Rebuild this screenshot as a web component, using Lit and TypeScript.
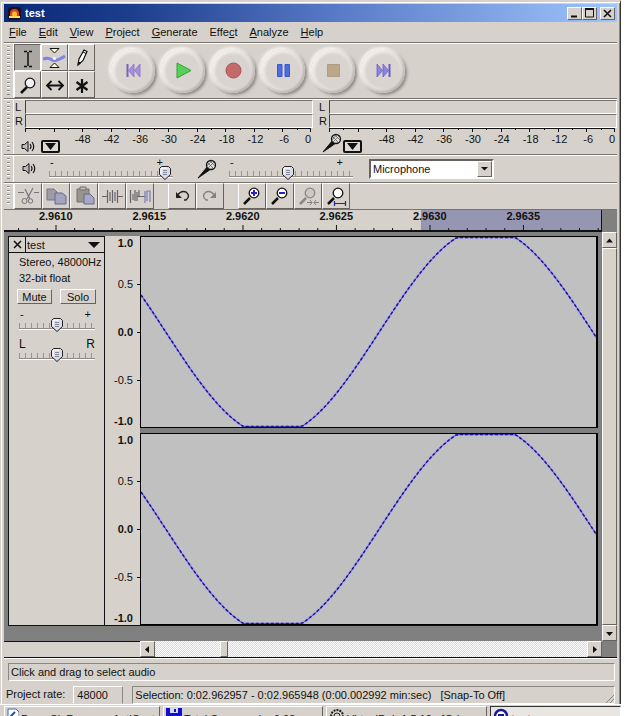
import { LitElement, html, svg, css } from "lit";
import { customElement, property } from "lit/decorators.js";

const base = css`
  * { box-sizing: border-box; }
  button, input, select { font: inherit; color: inherit; margin: 0; padding: 0; border-radius: 0; }
  svg { display: block; }
  .raised {
    background: #d6d1ca;
    border: 1px solid;
    border-color: #fff #66625e #66625e #fff;
  }
`;

/* Slider with tick marks and a shield-shaped handle */
@customElement("tick-slider")
class TickSlider extends LitElement {
  @property() low = "-";
  @property() high = "+";
  @property() label = "";
  @property({ type: Number }) value = 50;
  @property({ type: Boolean }) big = false;

  static styles = [base, css`
    :host { display: block; }
    .ends { display: flex; justify-content: space-between; height: 8px; line-height: 8px; padding: 0 4px 0 1px; }
    .ends.wide { padding-right: 10px; }
    .ends.big { font-size: 12px; padding: 0; }
    input {
      appearance: none;
      display: block;
      width: 100%;
      height: 14px;
      background:
        linear-gradient(#8d8984, #8d8984) 0 10px / 100% 1px no-repeat,
        linear-gradient(#fff, #fff) 0 11px / 100% 1px no-repeat,
        repeating-linear-gradient(90deg, #98948e 0 1px, transparent 1px 6px) 0 5px / 100% 5px no-repeat;
    }
    input::-webkit-slider-thumb {
      appearance: none;
      width: 12px;
      height: 14px;
      background: url("data:image/svg+xml,%3Csvg xmlns='http://www.w3.org/2000/svg' viewBox='0 0 12 14'%3E%3Cpath d='M2.5 .5h7l2 2v6L6 13.500 .5 8.500v-6z' fill='%23dcdce8' stroke='%23222'/%3E%3Cpath d='M2 8V3l1-1h5' fill='none' stroke='white'/%3E%3Cpath d='M4 4.500h4M4 6.500h4M4 8.500h4' stroke='%2388889c'/%3E%3C/svg%3E") no-repeat;
    }
  `];

  render() {
    const cls = this.big ? "ends big" : this.low === "-" && this.label.endsWith("volume") ? "ends wide" : "ends";
    return html`
      <div class=${cls}><span>${this.low}</span><span>${this.high}</span></div>
      <input type="range" aria-label=${this.label} .value=${String(this.value)}>`;
  }
}

const speaker = svg`<svg width="14" height="13" viewBox="0 0 14 13"><path d="M1 4.500h2.500L7 1.500v10L3.500 8.500H1z" fill="#bbb" stroke="#111"/><path d="M9 4q2 2.500 0 5M11 2q3.500 4.500 0 9" fill="none" stroke="#111" stroke-width="1.200"/></svg>`;
const mic = svg`<svg width="20" height="20" viewBox="0 0 20 20"><path d="M1 19L11 7l3 3z" fill="#111" stroke="#111"/><circle cx="14" cy="6" r="4.500" fill="#ddd" stroke="#111" stroke-width="1.300"/><path d="M11 4l5 5M13 2l5 5M17 3l-6 6M15 1.500L10 7" stroke="#555" stroke-width=".7"/></svg>`;

/* Peak meter with left and right bars over a dB scale */
@customElement("peak-meter")
class PeakMeter extends LitElement {
  @property() kind = "playback";

  static styles = [base, css`
    :host { display: block; flex: 1; min-width: 0; }
    .bars { display: grid; grid-template-columns: 11px 1fr; grid-auto-rows: 14px; }
    .bars span { line-height: 14px; padding-left: 1px; }
    .bar { border: 1px solid; border-color: #77736f #fff #fff #44423f; }
    .ticks { display: block; margin-left: 11px; width: calc(100% - 13px); height: 4px; }
    .foot { display: flex; }
    .icons { flex: 1; display: flex; align-items: flex-end; gap: 6px; padding-left: 7px; height: 21px; }
    .input .icons { gap: 1px; padding-left: 4px; }
    .scale { display: grid; grid-template-columns: repeat(8, 2fr) 1fr; width: calc((100% - 11px) * 0.85); text-align: center; line-height: 14px; }
    .scale span:last-child { text-align: right; padding-right: 2px; }
    .menu { width: 19px; height: 13px; border: 2px solid #111; border-radius: 2px; background: #ddd9d4; padding: 1px 2px; }
  `];

  render() {
    const out = this.kind === "playback";
    return html`
      <div class="bars">
        <span>L</span><div class="bar"></div>
        <span>R</span><div class="bar"></div>
      </div>
      <svg class="ticks" viewBox="0 0 286 4" preserveAspectRatio="none" shape-rendering="crispEdges">
        <path d="M0 .5H286" stroke="#111"/>
        ${Array.from({ length: 21 }, (_, i) => svg`<path d="M${Math.min(285.5, i * 14.3 + 0.5)} 0V${i % 2 ? 2 : 4}" stroke="#111"/>`)}
      </svg>
      <div class="foot ${out ? "" : "input"}">
        <div class="icons">
          ${out ? speaker : mic}
          <button class="menu" aria-label="${this.kind} meter menu"><svg width="11" height="7" viewBox="0 0 11 7"><path d="M0 0h11L5.500 7z" fill="#111"/></svg></button>
        </div>
        <div class="scale">${[-48, -42, -36, -30, -24, -18, -12, -6, 0].map((n) => html`<span>${n}</span>`)}</div>
      </div>`;
  }
}

/* One audio channel: amplitude axis and waveform */
@customElement("wave-channel")
class WaveChannel extends LitElement {
  static styles = [base, css`
    :host { display: grid; grid-template-columns: 35px 1fr; min-height: 0; }
    .axis { display: grid; grid-template-rows: 1fr 2fr 2fr 2fr 1fr; background: #d6d1ca; text-align: right; line-height: 14px; }
    .axis span { display: flex; align-items: center; justify-content: flex-end; gap: 4px; padding-right: 0; }
    .axis span::after { content: ""; width: 3px; height: 1px; background: #111; }
    .axis .top { align-items: flex-start; }
    .axis .bottom { align-items: flex-end; }
    .axis .top::after, .axis .bottom::after { background: transparent; }
    .strong { font-weight: bold; }
    .wave { border: 1px solid #000; border-right-width: 2px; background: #c0c0c0; min-height: 0; overflow: hidden; }
    .wave svg { width: 100%; height: 100%; }
    path { fill: none; vector-effect: non-scaling-stroke; }
  `];

  render() {
    const points = Array.from({ length: 153 }, (_, i) => {
      const x = i * 3;
      const v = -1.1 * Math.cos((Math.PI * (x - 131.5)) / 213.5);
      return `${x} ${(95 - Math.max(-1, Math.min(1, v)) * 94.5).toFixed(1)}`;
    });
    const d = "M" + points.join("L");
    return html`
      <div class="axis">
        <span class="top strong">1.0</span><span>0.5</span><span class="strong">0.0</span><span>-0.5</span><span class="bottom strong">-1.0</span>
      </div>
      <div class="wave">
        <svg viewBox="0 0 455 190" preserveAspectRatio="none" aria-label="Waveform">
          <path d=${d} stroke="#b4b0e0" stroke-width="3"></path>
          <path d=${d} stroke="#5b54d0" stroke-width="1"></path>
          <path d=${d} stroke="#1c148c" stroke-width="1.5" stroke-dasharray="3 2"></path>
        </svg>
      </div>`;
  }
}

const lens = (stroke: string, fill: string, sign: unknown, handle = "#111") => svg`
  <path d="M3 19l6-6" stroke=${handle} stroke-width="2.500"/><circle cx="13" cy="8" r="4.800" fill=${fill} stroke=${stroke} stroke-width="1.300"/>${sign}`;
const glyph = (body: unknown) => html`<svg width="23" height="22" viewBox="0 0 23 22" fill="none">${body}</svg>`;

const toolIcons: [string, unknown][] = [
  ["Selection tool", svg`<path d="M8 4.500h3M13 4.500h3M8 19.500h3M13 19.500h3M12 5v14" stroke="#111" stroke-width="1.500"/>`],
  ["Envelope tool", svg`<path d="M0 12q5-2 9 1q4 2 13-4" stroke="#7c86e4" stroke-width="3"/><path d="M7 1.500h9L11.500 6z" fill="#fffbd8" stroke="#111"/><path d="M7 20.500h9L11.500 16z" fill="#fffbd8" stroke="#111"/><circle cx="11.500" cy="11.500" r="1.500" fill="#fff"/>`],
  ["Draw tool", svg`<path d="M8 18l1-6 5-9 3 1.500-4 9z" fill="#fff" stroke="#111" stroke-width="1.200"/><path d="M8 18l.5-3 2 1zM13 5l3 1.500" fill="#111" stroke="#111"/>`],
  ["Zoom tool", svg`<path d="M5 19l6-6" stroke="#111" stroke-width="2.500"/><circle cx="14" cy="9" r="4.800" fill="#f2f2f4" stroke="#111" stroke-width="1.200"/>`],
  ["Time shift tool", svg`<path d="M5 11.500h14" stroke="#111" stroke-width="2"/><path d="M8.500 7L4 11.500 8.500 16M15.500 7L20 11.500 15.500 16" stroke="#111" stroke-width="1.800"/>`],
  ["Multi-tool mode", svg`<path d="M12 5v14M6.500 8l11 8M17.500 8l-11 8" stroke="#111" stroke-width="2.200"/>`],
];

const transport: [string, unknown][] = [
  ["Skip to start", svg`<path d="M1.500 1v13" stroke="#7a62b8" stroke-width="2"/><path d="M8 1v13L2.500 7.500zM14 1v13L8.500 7.500z" fill="#a690dc" stroke="#8670c4" stroke-width=".8"/>`],
  ["Play", svg`<path d="M1 0l14 7.500L1 15z" fill="#58d058" stroke="#32a03a"/>`],
  ["Record", svg`<circle cx="7.500" cy="7.500" r="7.500" fill="#c46a6a" stroke="#a65456"/>`],
  ["Pause", svg`<path d="M1.500 1.500h4.500v12H1.500zM9 1.500h4.500v12H9z" fill="#4c6ce4" stroke="#3c58cc"/>`],
  ["Stop", svg`<path d="M1.500 1.500h12v12h-12z" fill="#bca888" stroke="#b09c80"/>`],
  ["Skip to end", svg`<path d="M13.500 1v13" stroke="#6a5cc0" stroke-width="2"/><path d="M1 1v13L6.500 7.500zM7 1v13L12.500 7.500z" fill="#8c84e0" stroke="#6a60c8" stroke-width=".8"/>`],
];

const editGroups: [string, unknown][][] = [
  [
    ["Cut", svg`<path d="M8 4l5 10M16 3l-6 11M1 7.500h6M17 7.500h5" stroke="#77757a" stroke-width="1.200"/><circle cx="7.500" cy="16" r="2.500" stroke="#77757a"/><circle cx="13.500" cy="16" r="2.200" stroke="#77757a"/>`],
    ["Copy", svg`<path d="M2 4h7l3 3v8H2z" fill="#9c9ca4" stroke="#77777f"/><path d="M10 8h7l4 3v8H10z" fill="#a4a4c0" stroke="#66668a"/>`],
    ["Paste", svg`<path d="M4 4h12v13H4z" fill="#98958f" stroke="#707070"/><path d="M7 2h6v3H7z" fill="#bbb" stroke="#707070"/><path d="M11 9h6l4 4v6H11z" fill="#a8a8c4" stroke="#66668a"/>`],
    ["Trim", svg`<path d="M1 11.500h5M17 11.500h5M6.500 5v13M9 7v9M11.500 5v13M14 7v9M16.500 5v13" stroke="#66646a" stroke-width="1.200"/>`],
    ["Silence", svg`<path d="M1.500 5v13M4 9v6M6 5v11M8 7v9M10 5v6M8 11.500h8" stroke="#66646a" stroke-width="1.200"/><path d="M16 6v12M18 16V6h3v11" stroke="#7878b8" stroke-width="1.200"/>`],
  ],
  [
    ["Undo", svg`<path d="M6 11q4-6 9-4q5 4 0 8h-2" stroke="#222" stroke-width="1.400"/><path d="M5 7v6h6z" fill="#222"/>`],
    ["Redo", svg`<path d="M16 11q-4-6-9-4q-5 4 0 8h2" stroke="#85827e" stroke-width="1.400"/><path d="M17 7v6h-6z" fill="#85827e"/>`],
  ],
  [
    ["Zoom in", lens("#111", "#fff", svg`<path d="M10 8h6M13 5v6" stroke="#2222c8" stroke-width="2"/>`)],
    ["Zoom out", lens("#111", "#fff", svg`<path d="M10 8h6" stroke="#2222c8" stroke-width="2"/>`)],
    ["Fit selection", lens("#8a8782", "#ccc8c2", svg`<path d="M10 17.500h5M17 17.500h5M13 15l2 2.500-2 2.500M19 15l-2 2.500 2 2.500" stroke="#85827e"/>`, "#8a8782")],
    ["Fit project", lens("#111", "#fff", svg`<path d="M9 18.500h12M9.500 16v5M20.500 16v5" stroke="#2222a8" stroke-width="1.200"/>`)],
  ],
];

@customElement("app-root")
class AppRoot extends LitElement {
  static styles = [base, css`
    :host {
      display: flex;
      flex-direction: column;
      height: 100vh;
      padding-right: 19px;
      background: #fff;
      color: #111;
      font: 11px "Liberation Sans", Arial, sans-serif;
      white-space: nowrap;
      overflow: hidden;
      box-sizing: border-box;
    }
    .window {
      flex: 1;
      min-height: 0;
      display: flex;
      flex-direction: column;
      background: #d6d1ca;
      border: solid;
      border-width: 2px 1px 0 1px;
      border-color: #d6d1ca #333 #333 #d6d1ca;
      box-shadow: inset 1px 1px #fff, inset -1px 0 #8b8783;
      padding: 2px 3px 0 3px;
    }
    .title { flex: none; display: flex; align-items: center; height: 18px; padding: 0 2px 0 4px; gap: 4px; color: #fff; font-weight: bold; background: linear-gradient(90deg, #0a2a78, #1c3c8c 20%, #5a7cc8 55%, #a0c4fc); }
    h1 { font: inherit; margin: 0; flex: 1; }
    .controls { display: flex; }
    .controls button { width: 15px; height: 13px; display: grid; place-items: center; }
    .controls button:last-child { margin-left: 3px; }
    nav { flex: none; display: flex; gap: 12px; height: 20px; padding-left: 5px; }
    nav a { color: inherit; text-decoration: none; line-height: 20px; }
    .bar { flex: none; display: flex; border-top: 1px solid #77736f; box-shadow: inset 0 1px #fff; }
    .grip { flex: none; width: 10px; border-right: 1px solid #fff; padding: 3px; }
    .grip::before { content: ""; display: block; height: 100%; width: 3px; background: repeating-linear-gradient(#8d8984 0 1px, #fff 1px 2px, transparent 2px 4px); }
    .tools { display: grid; grid-template-columns: repeat(3, 27px); grid-auto-rows: 27px; padding-top: 1px; }
    .tool { display: grid; place-items: center; overflow: hidden; }
    .tool.on { background: #aaa6a1; border-color: #66625e #fff #fff #66625e; }
    .transport { display: flex; align-items: center; gap: 6px; padding-left: 16px; }
    .round {
      width: 44px; height: 44px; border: 0; border-radius: 50%; display: grid; place-items: center;
      background: radial-gradient(circle, #d9d4cf 52%, #e6e2dd 62%, #d4cfc9 72%);
      box-shadow: -2px -2px 3px #f6f4f1, 2px 2px 3px #908b86, inset 2px 2px 3px #f4f1ee, inset -2px -2px 3px #bbb6b0;
    }
    .meters { flex: 1; display: flex; gap: 5px; padding-top: 1px; height: 55px; }
    .mixer { height: 28px; }
    .mixer .row { flex: 1; display: flex; align-items: center; padding-left: 8px; }
    .mixer tick-slider { width: 124px; }
    .out { margin: 0 24px 0 13px; }
    .in { margin: 0 16px 0 12px; }
    select { width: 125px; height: 20px; background: #fff; border: 2px solid; border-color: #66625e #fff #fff #66625e; padding: 0 2px; appearance: none; }
    .combo { display: grid; grid-template-columns: 1fr 17px; align-items: center; }
    .combo select { grid-area: 1 / 1 / 2 / 3; }
    .combo .drop { grid-area: 1 / 2; z-index: 1; width: 15px; height: 16px; display: grid; place-items: center; pointer-events: none; }
    .edit { height: 27px; }
    .group { display: flex; margin-right: 14px; }
    .group .tool { width: 28px; }
    .timeline { flex: none; display: flex; height: 23px; background: #808080; border-top: 1px solid #77736f; }
    .ruler { flex: 1; background: linear-gradient(90deg, #d6d1ca 69.9%, #9796b2 69.9%); border: solid #111; border-width: 0 1px 2px 0; font-weight: bold; }
    .ruler div { display: flex; padding: 0 31px 0 5px; line-height: 13px; }
    .ruler span { flex: 1; text-align: center; }
    .ruler svg { width: 100%; height: 7px; }
    .corner { width: 15px; }
    .body { flex: 1; min-height: 0; display: flex; background: #808080; }
    .tracks { flex: 1; min-width: 0; padding: 4px 4px 15px; display: flex; }
    .track { flex: 1; min-width: 0; display: flex; border: 1px solid #111; border-right: 0; border-top: 0; }
    .panel { flex: none; width: 96px; background: #d6d1ca; border-right: 1px solid #111; border-top: 1px solid #111; }
    .head { display: flex; height: 16px; border-bottom: 1px solid #111; align-items: center; padding-right: 4px; }
    .head button { border: 0; background: none; }
    .close { width: 16px; height: 16px; display: grid; place-items: center; }
    .name { flex: 1; display: flex; align-items: center; justify-content: space-between; height: 15px; }
    .head .name { border-left: 1px solid #111; padding-left: 1px; }
    .info { padding: 1px 0 0 10px; line-height: 16px; }
    .switches { display: grid; grid-template-columns: 35px 36px; gap: 8px; padding: 3px 0 6px 8px; }
    .switches button { height: 15px; line-height: 12px; }
    .panel tick-slider { width: 76px; margin: 0 0 8px 10px; }
    .channels { flex: 1; min-width: 0; display: grid; grid-template-rows: 1fr 1fr; gap: 5px; background: linear-gradient(90deg, #d6d1ca 35px, #808080 35px); }
    .vscroll { flex: none; width: 15px; display: flex; flex-direction: column; }
    .vscroll button { height: 16px; display: grid; place-items: center; }
    .vthumb { flex: 1; background: #d7d3c8; }
    .hrow { flex: none; display: flex; height: 17px; border-bottom: 1px solid #111; background: #808080; }
    .hpad { width: 136px; background: #d6d1ca; border-top: 1px solid #111; }
    .hscroll { flex: 1; display: flex; background: repeating-conic-gradient(#fff 0 25%, #dcd9d2 0 50%) 0 0 / 2px 2px; }
    .hscroll button { width: 15px; display: grid; place-items: center; }
    .hthumb { width: 8px; margin: 0 auto 0 65px; }
    .status { flex: none; border-top: 1px solid #fff; padding: 4px 2px 0 4px; }
    .field { border: 1px solid; border-color: #8b8783 #fff #fff #8b8783; line-height: 16px; padding-left: 2px; }
    .facts { display: flex; padding-top: 5px; height: 23px; margin-left: -2px; line-height: 17px; }
    .facts input { width: 50px; margin: 0 9px 0 8px; padding-left: 3px; border: 1px solid; border-color: #fff #8b8783 #d6d1ca #fff; background: #d6d1ca; }
    .facts .field { flex: 1; display: flex; justify-content: space-between; align-items: flex-end; }
    pre { font: inherit; margin: 0; }
    .taskbar { flex: none; height: 12px; overflow: hidden; background: #d6d1ca; border-top: 1px solid #fff; display: grid; grid-template-columns: 156px 160px 161px 1fr; gap: 3px; padding: 1px 0 0 4px; }
    .taskbar button { height: 20px; display: flex; align-items: flex-start; gap: 2px; padding: 1px 0 0 2px; line-height: 18px; text-align: left; overflow: hidden; }
    .taskbar button span { padding-top: 2px; }
    .taskbar .active { border-color: #333 #fff #fff #333; font-weight: bold; background: #e9e6e1; }
    .taskbar svg { flex: none; }
  `];

  tri(d: string) {
    return html`<svg width="9" height="9" viewBox="0 0 9 9"><path d=${d} fill="#111"/></svg>`;
  }

  render() {
    const menus = [["", "F", "ile"], ["", "E", "dit"], ["", "V", "iew"], ["", "P", "roject"], ["", "G", "enerate"], ["Effe", "c", "t"], ["", "A", "nalyze"], ["", "H", "elp"]];
    return html`
      <div class="window">
        <header class="title">
          <svg width="13" height="13" viewBox="0 0 13 13"><rect width="13" height="13" rx="3" fill="#1a1020"/><path d="M2 7q0-5 4.500-5T11 7v3H2z" fill="#e8401c"/><circle cx="6.500" cy="7" r="2.500" fill="#ffc42c"/><path d="M1 10h11" stroke="#ffd860" stroke-width="2"/></svg>
          <h1>test</h1>
          <div class="controls">
            <button class="raised" aria-label="Minimize"><svg width="11" height="9"><path d="M2 7.500h6" stroke="#111" stroke-width="2"/></svg></button>
            <button class="raised" aria-label="Maximize"><svg width="11" height="10" fill="none"><path d="M1.500 1v8h8V1M1 1.500h9" stroke="#111"/><path d="M1 1h9" stroke="#111" stroke-width="2"/></svg></button>
            <button class="raised" aria-label="Close"><svg width="11" height="9"><path d="M2 1l7 7M9 1L2 8" stroke="#111" stroke-width="1.600"/></svg></button>
          </div>
        </header>
        <nav>${menus.map(([a, b, c]) => html`<a href="#">${a}<u>${b}</u>${c}</a>`)}</nav>

        <div class="bar">
          <div class="grip"></div>
          <div class="tools">${toolIcons.map(([n, i], k) => html`<button class="tool raised ${k ? "" : "on"}" aria-label=${n}>${glyph(i)}</button>`)}</div>
          <div class="transport">${transport.map(([n, i]) => html`<button class="round" aria-label=${n}><svg width="15" height="15" viewBox="0 0 15 15" overflow="visible">${i}</svg></button>`)}</div>
        </div>
        <div class="bar">
          <div class="grip"></div>
          <div class="meters"><peak-meter kind="playback"></peak-meter><peak-meter kind="recording"></peak-meter></div>
        </div>
        <div class="bar mixer">
          <div class="grip"></div>
          <div class="row">
            ${html`${speaker}`}<tick-slider class="out" label="Output volume" .value=${98}></tick-slider>
            ${html`${mic}`}<tick-slider class="in" label="Input volume" .value=${47}></tick-slider>
            <div class="combo">
              <select aria-label="Input source"><option>Microphone</option></select>
              <span class="drop raised">${this.tri("M1 3h7L4.500 6.500z")}</span>
            </div>
          </div>
        </div>
        <div class="bar edit">
          <div class="grip"></div>
          ${editGroups.map((g) => html`<div class="group">${g.map(([n, i]) => html`<button class="tool raised" aria-label=${n}>${glyph(i)}</button>`)}</div>`)}
        </div>

        <div class="timeline">
          <div class="ruler">
            <div>${["2.9610", "2.9615", "2.9620", "2.9625", "2.9630", "2.9635"].map((t) => html`<span>${t}</span>`)}</div>
            <svg viewBox="0 0 598 7" preserveAspectRatio="none" shape-rendering="crispEdges">
              ${Array.from({ length: 32 }, (_, i) => svg`<path d="M${(14.6 + i * 18.73).toFixed(1)} ${i % 5 === 2 ? 2 : 5}V7" stroke="#111"/>`)}
            </svg>
          </div>
          <div class="corner"></div>
        </div>

        <main class="body">
          <div class="tracks">
            <section class="track">
              <div class="panel">
                <div class="head">
                  <button class="close" aria-label="Close track"><svg width="9" height="9"><path d="M1 1l7 7M8 1L1 8" stroke="#111" stroke-width="1.500"/></svg></button>
                  <button class="name">test <svg width="12" height="6"><path d="M0 0h12L6 6z" fill="#111"/></svg></button>
                </div>
                <div class="info">Stereo, 48000Hz<br>32-bit float</div>
                <div class="switches"><button class="raised">Mute</button><button class="raised">Solo</button></div>
                <tick-slider label="Gain" .value=${50}></tick-slider>
                <tick-slider label="Pan" low="L" high="R" big .value=${50}></tick-slider>
              </div>
              <div class="channels"><wave-channel></wave-channel><wave-channel></wave-channel></div>
            </section>
          </div>
          <div class="vscroll">
            <button class="raised" aria-label="Scroll up">${this.tri("M1 6.500h7L4.500 2.500z")}</button>
            <div class="vthumb raised"></div>
            <button class="raised" aria-label="Scroll down">${this.tri("M1 3h7L4.500 7z")}</button>
          </div>
        </main>
        <div class="hrow">
          <div class="hpad"></div>
          <div class="hscroll">
            <button class="raised" aria-label="Scroll left">${this.tri("M6 1v7L2 4.500z")}</button>
            <div class="hthumb raised"></div>
            <button class="raised" aria-label="Scroll right">${this.tri("M3 1v7l4-3.500z")}</button>
          </div>
          <div class="corner"></div>
        </div>

        <footer class="status">
          <div class="field">Click and drag to select audio</div>
          <div class="facts">
            <label for="rate">Project rate:</label><input id="rate" value="48000">
            <div class="field">
              <pre>Selection: 0:02.962957 - 0:02.965948 (0:00.002992 min:sec)   [Snap-To Off]</pre>
              <svg width="8" height="8"><path d="M0 8L8 0M4 8l4-4" stroke="#8b8783"/></svg>
            </div>
          </div>
        </footer>
      </div>
      <div class="taskbar">
        <button class="raised"><svg width="12" height="12"><path d="M1 1h8l3 3v8H1z" fill="#fff" stroke="#3a6ab0"/><path d="M3 9l5-5" stroke="#2850a8" stroke-width="2"/></svg><span>Prom Sk Forums - AntiContr</span></button>
        <button class="raised"><svg width="16" height="14"><path d="M0 0h16v14H0z" fill="#1010c8"/><path d="M4 0h8v5H4z" fill="#d8d8f8"/><path d="M9 1v3" stroke="#1010c8" stroke-width="2"/></svg><span>Total Commander 6.03</span></button>
        <button class="raised"><svg width="16" height="14" fill="none"><circle cx="8" cy="8" r="6" stroke="#222" stroke-width="2" stroke-dasharray="2 1"/><circle cx="8" cy="8" r="3" stroke="#222"/></svg><span>VirtualDub 1.5.10 - [Odp..</span></button>
        <button class="raised active"><svg width="16" height="14"><circle cx="8" cy="8" r="6" fill="#fff" stroke="#1a1a90" stroke-width="2.500"/><path d="M5 7h6" stroke="#1a1a90" stroke-width="2"/></svg><span>test</span></button>
      </div>`;
  }
}
